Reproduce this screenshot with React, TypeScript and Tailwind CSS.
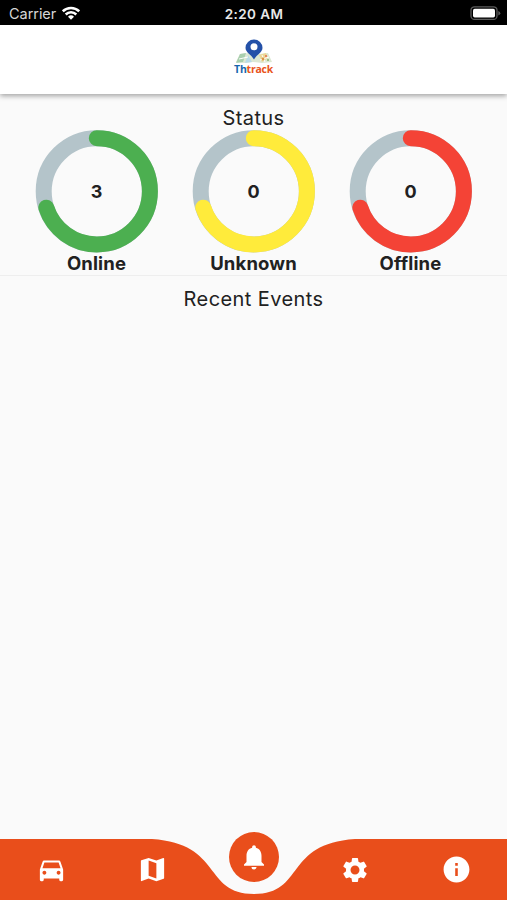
import { MdDirectionsCar, MdInfo, MdMap, MdNotifications, MdSettings } from 'react-icons/md';

interface StatusItem {
  label: string;
  count: number;
  color: string;
}

const statuses: StatusItem[] = [
  { label: 'Online', count: 3, color: '#4caf50' },
  { label: 'Unknown', count: 0, color: '#ffeb3b' },
  { label: 'Offline', count: 0, color: '#f44336' },
];

function StatusBar() {
  return (
    <div className="grid grid-cols-3 items-center h-[25px] pb-px pt-1 bg-black text-white">
      <div className="flex items-center pl-[9px] gap-[6px] text-[14.5px] leading-5 tracking-[-0.05px] text-[#d6d6d6]">
        Carrier
        <svg width="18" height="14" viewBox="0 0 18 14" className="-mt-0.5" fill="none" stroke="#fff" strokeWidth="2.5">
          <path d="M0.8 5.3a11.6 11.6 0 0 1 16.4 0" />
          <path d="M3.7 8.5a7.5 7.5 0 0 1 10.6 0" />
          <path d="M9 13.8L6 10.7a4.3 4.3 0 0 1 6 0z" fill="#fff" stroke="none" />
        </svg>
      </div>
      <div className="pl-px text-center text-[13.5px] leading-5 font-semibold tracking-[0.4px] text-[#e8e8e8]">2:20 AM</div>
      <div className="flex justify-end -mt-[2px] pr-[6px]">
        <svg width="31" height="15" viewBox="0 0 31 15">
          <rect x="1" y="0.8" width="26" height="12.6" rx="3.5" fill="none" stroke="#5c5c5c" strokeWidth="1.3" />
          <rect x="3" y="2.7" width="22" height="8.8" rx="1.7" fill="#fff" />
          <path d="M28.3 5v4.4q2-0.8 2-2.2t-2-2.2z" fill="#5c5c5c" />
        </svg>
      </div>
    </div>
  );
}

function Logo() {
  return (
    <div className="flex flex-col items-center w-10">
      <svg width="38" height="25" viewBox="0 0 38 25">
        <path d="M5 15l9-1 10 1 9-1 4 9-10 1-9-1-9 1-8-1z" fill="#dce8d3" />
        <path d="M5 15l6-1-3 9-7 1z" fill="#a9cfae" />
        <path d="M13 16l4 7-7 1z" fill="#b9dbe6" />
        <path d="M24 16l7-2 2 5-6 4z" fill="#ecd795" />
        <path d="M4 20l9-2M25 21l9-3M27 16l3 7" stroke="#fff" strokeWidth="1" />
        <circle cx="28" cy="20" r="1.4" fill="#d99545" />
        <circle cx="31" cy="17" r="1" fill="#e46d4f" />
        <circle cx="33" cy="21" r="1" fill="#88b36b" />
        <path d="M19 0.5a8.5 8.300 0 0 0-8.500 8.300c0 4.700 5.500 6.500 8.500 11.700 3-5.200 8.500-7 8.500-11.700a8.500 8.300 0 0 0-8.500-8.300z" fill="#2451a8" />
        <circle cx="19" cy="7.800" r="3.500" fill="#fff" />
      </svg>
      <div className="-mt-px text-[10.5px] leading-[12px] font-bold tracking-[-0.25px] font-['Open_Sans',sans-serif] text-[#e95420]">
        <span className="text-[#1765ac]">Th</span>track
      </div>
    </div>
  );
}

function StatusRing({ label, count, color }: StatusItem) {
  return (
    <div className="flex flex-col items-center w-[157px]">
      <div className="grid place-items-center">
        <svg className="col-start-1 row-start-1" width="123" height="123" viewBox="0 0 123 123" fill="none" strokeWidth="16">
          <circle cx="61.8" cy="61.3" r="53.100" stroke="#b4c4ca" />
          <circle
            cx="61.8"
            cy="61.3"
            r="53.100"
            stroke={color}
            strokeLinecap="round"
            pathLength={100}
            strokeDasharray="70 100"
            transform="rotate(-90 61.8 61.3)"
          />
        </svg>
        <span className="col-start-1 row-start-1 text-[18px] font-bold">{count}</span>
      </div>
      <div className="-mt-px text-[18.5px] leading-[23px] font-bold tracking-[0.15px]">{label}</div>
    </div>
  );
}

function BottomNav() {
  return (
    <nav className="relative h-[61px] text-white">
      <svg className="absolute inset-0" width="507" height="61" viewBox="0 0 507 61">
        <path d="M0 0H152C223 4.600 203 55 254 55S284 4.600 355 0H507V61H0z" fill="#e94e1b" />
      </svg>
      <div className="relative grid grid-cols-5 h-full pl-px justify-items-center items-center">
        <MdDirectionsCar size={31} />
        <MdMap size={31} />
        <div className="relative -top-[13px] flex items-center justify-center size-[50px] rounded-full bg-[#e94e1b]">
          <MdNotifications size={30} />
        </div>
        <MdSettings size={30} />
        <MdInfo size={31} />
      </div>
    </nav>
  );
}

export default function App() {
  return (
    <div className="flex flex-col w-[507px] h-[900px] overflow-hidden bg-[#fafafa] text-[#212121] font-['Inter',sans-serif]">
      <StatusBar />
      <header className="flex justify-center h-[69px] pt-[14px] bg-white shadow-[0_2px_5px_rgba(0,0,0,0.35)]">
        <Logo />
      </header>
      <main className="flex-1">
        <section className="pt-[12px] h-[182px] border-b border-[#eeeeee]">
          <h2 className="text-center text-[20px] leading-6 tracking-[0.4px]">Status</h2>
          <div className="flex justify-center">
            {statuses.map((status) => (
              <StatusRing key={status.label} {...status} />
            ))}
          </div>
        </section>
        <h2 className="pt-[11px] text-center text-[20px] leading-6 tracking-[0.4px]">Recent Events</h2>
      </main>
      <BottomNav />
    </div>
  );
}
